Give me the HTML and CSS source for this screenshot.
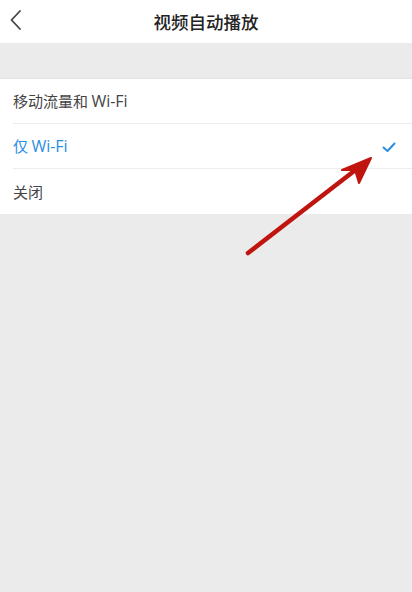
FILE: index.html
```html
<!DOCTYPE html>
<html lang="zh">
<head>
<meta charset="utf-8">
<link rel="stylesheet" href="styles.css">
</head>
<body>
<div class="page">
  <header class="topbar">
    <svg class="back" width="14" height="22" viewBox="0 0 14 22"><path d="M11 2 L2.5 11 L11 20" fill="none" stroke="#444" stroke-width="1.8" stroke-linecap="round" stroke-linejoin="round"/></svg>
    <h1 class="title">视频自动播放</h1>
  </header>
  <div class="gap"></div>
  <ul class="list">
    <li class="row"><span>移动流量和 <span class="latin">Wi-Fi</span></span></li>
    <li class="row active"><span>仅 <span class="latin">Wi-Fi</span></span>
      <svg class="check" width="14" height="11" viewBox="0 0 14 11"><path d="M1.5 5.5 L5.5 9 L12.5 1.5" fill="none" stroke="#2a8ee0" stroke-width="2" stroke-linecap="round" stroke-linejoin="round"/></svg>
    </li>
    <li class="row"><span>关闭</span></li>
  </ul>
  <svg class="arrow" width="412" height="592" viewBox="0 0 412 592">
    <line x1="248" y1="253" x2="358" y2="168" stroke="#c0150f" stroke-width="4.5" stroke-linecap="round"/>
    <path d="M371 158 L342 170 L355 170 L359 183 Z" fill="#c0150f" stroke="#c0150f" stroke-width="2" stroke-linejoin="round"/>
  </svg>
</div>
</body>
</html>
```
FILE: styles.css
```css
* { box-sizing: border-box; }
html, body { margin: 0; padding: 0; }
body {
  background: #ebebeb;
  font-family: "Noto Sans CJK SC", sans-serif;
  width: 412px;
  height: 592px;
  overflow: hidden;
}
.page { position: relative; width: 412px; height: 592px; }
.topbar {
  height: 43px;
  background: #fff;
  display: flex;
  align-items: center;
  justify-content: center;
  position: relative;
}
.back { position: absolute; left: 9px; top: 9px; }
.title {
  margin: 0;
  font-size: 17.5px;
  font-weight: 500;
  color: #222;
  line-height: 43px;
}
.gap { height: 36px; border-bottom: 1px solid #e2e2e2; }
.list {
  list-style: none;
  margin: 0;
  padding: 0 0 0 13px;
  background: #fff;
}
.row {
  height: 45px;
  display: flex;
  align-items: center;
  justify-content: space-between;
  padding-right: 16px;
  font-size: 15px;
  color: #444;
  border-bottom: 1px solid #ededed;
}
.row:last-child { border-bottom: none; }
.row.active { color: #2a8ee0; }
.latin { font-family: "Open Sans", sans-serif; font-size: 16px; }
.check { margin-top: 2px; }
.arrow { position: absolute; left: 0; top: 0; pointer-events: none; }
```
